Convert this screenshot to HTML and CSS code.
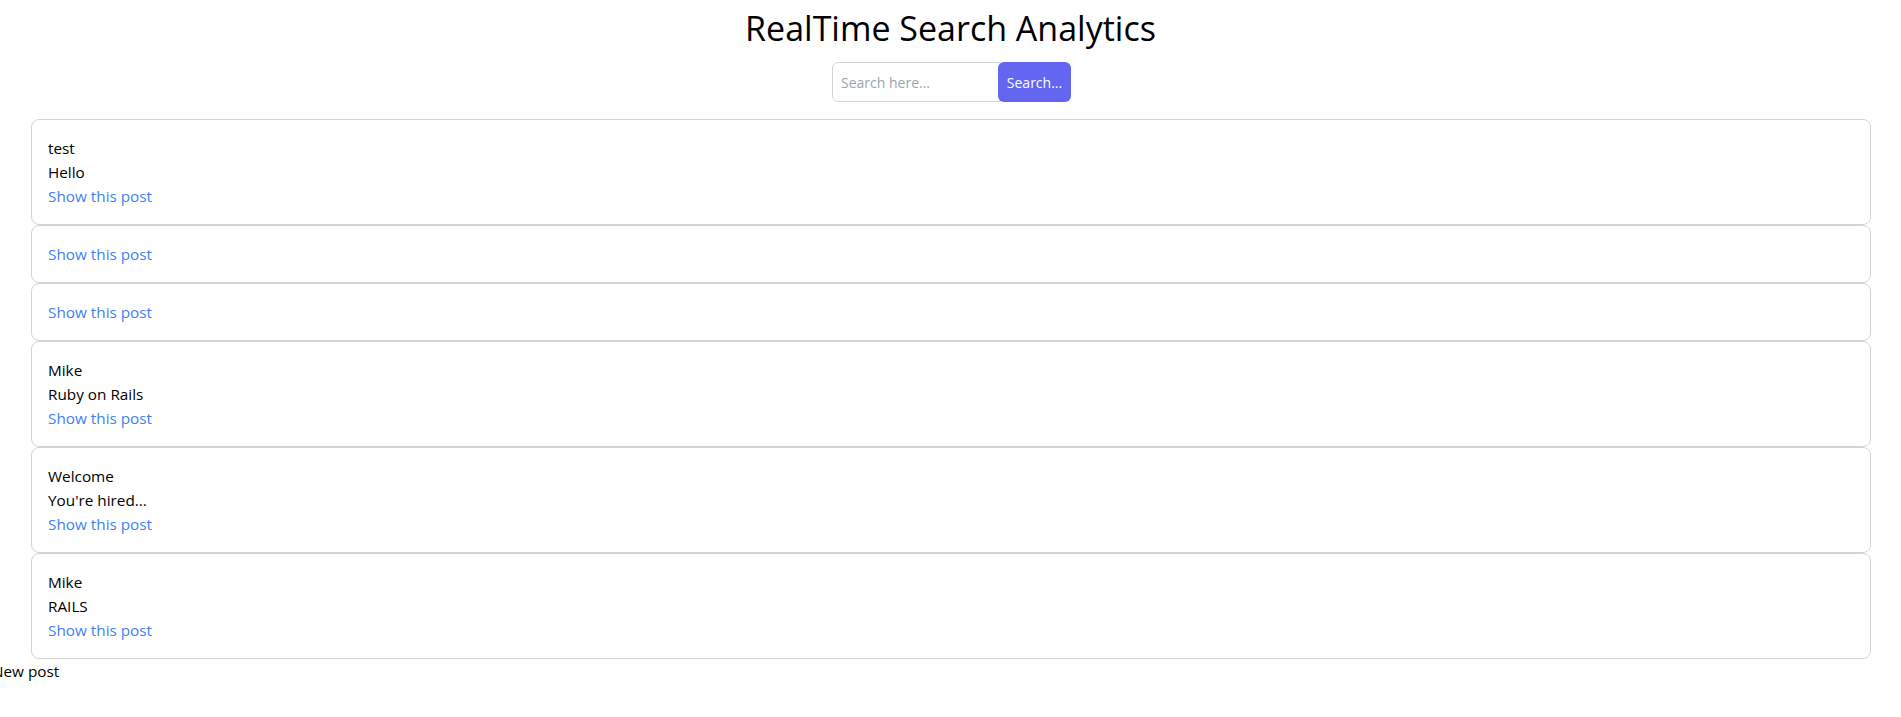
FILE: index.html
```html
<!DOCTYPE html>
<html lang="en">
<head>
<meta charset="utf-8">
<title>RealTime Search Analytics</title>
<link rel="stylesheet" href="styles.css">
</head>
<body>
<header class="header">
  <h1 class="title">RealTime Search Analytics</h1>
  <form class="search">
    <input class="search-input" type="text" placeholder="Search here...">
    <button class="search-btn" type="button">Search...</button>
  </form>
</header>
<main class="posts">
  <div class="post">
    <p class="post-line">test</p>
    <p class="post-line">Hello</p>
    <a class="post-link" href="#">Show this post</a>
  </div>
  <div class="post">
    <a class="post-link" href="#">Show this post</a>
  </div>
  <div class="post">
    <a class="post-link" href="#">Show this post</a>
  </div>
  <div class="post">
    <p class="post-line">Mike</p>
    <p class="post-line">Ruby on Rails</p>
    <a class="post-link" href="#">Show this post</a>
  </div>
  <div class="post">
    <p class="post-line">Welcome</p>
    <p class="post-line">You're hired...</p>
    <a class="post-link" href="#">Show this post</a>
  </div>
  <div class="post">
    <p class="post-line">Mike</p>
    <p class="post-line">RAILS</p>
    <a class="post-link" href="#">Show this post</a>
  </div>
</main>
<a class="new-post" href="#">New post</a>
</body>
</html>
```
FILE: styles.css
```css
* { box-sizing: border-box; }
html, body { margin: 0; padding: 0; background: #fff; }
body {
  font-family: "Open Sans", "Noto Sans", sans-serif;
  font-size: 15.3px;
  line-height: 24px;
  color: #000;
  overflow-x: hidden;
}
.header {
  display: flex;
  flex-direction: column;
  align-items: center;
  padding-top: 8px;
}
.title {
  margin: 0;
  font-size: 34px;
  line-height: 40px;
  font-weight: 400;
}
.search {
  display: flex;
  margin-top: 14px;
  height: 40px;
  margin-left: 2px;
}
.search-input {
  width: 172px;
  height: 40px;
  border: 1px solid #d1d5db;
  border-radius: 6px;
  padding: 0 8px;
  font-family: inherit;
  font-size: 14px;
  color: #111;
  outline: none;
}
.search-input::placeholder { color: #9ca3af; }
.search-btn {
  width: 73px;
  height: 40px;
  border: none;
  border-radius: 6px;
  margin-left: -6px;
  background: #6366f1;
  color: #fff;
  font-family: inherit;
  font-size: 14px;
  padding: 0 6px;
  position: relative;
}
.posts {
  display: flex;
  flex-direction: column;
  margin: 17px 30px 0 31px;
}
.post {
  border: 1px solid #d1d5db;
  border-radius: 8px;
  padding: 16px 13px 16px 16px;
  display: flex;
  flex-direction: column;
  align-items: flex-start;
}
.post-line { margin: 0; }
.post-link { color: #3b82f6; text-decoration: none; }
.new-post {
  display: block;
  margin-left: -8px;
  color: #000;
  text-decoration: none;
  margin-top: 0;
}
```
